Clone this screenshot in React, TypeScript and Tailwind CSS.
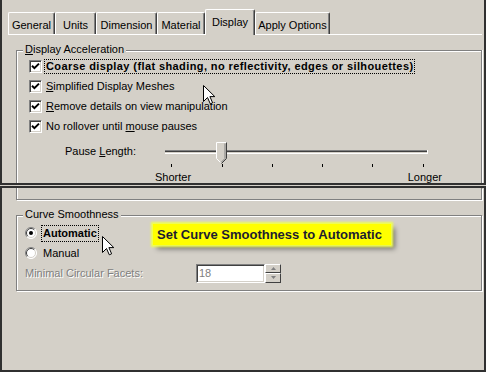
import React from "react";

const tabs = [
  { label: "General", cls: "w-[47px]", sel: false },
  { label: "Units", cls: "w-[41px]", sel: false },
  { label: "Dimension", cls: "w-[61px]", sel: false },
  { label: "Material", cls: "w-[48px]", sel: false },
  { label: "Display", cls: "w-[50px]", sel: true },
  { label: "Apply Options", cls: "w-[75px]", sel: false },
];

function Checkbox() {
  return (
    <span className="w-[13px] h-[13px] bg-white border border-t-[#808080] border-l-[#808080] border-b-white border-r-white shadow-[inset_1px_1px_0_#404040,inset_-1px_-1px_0_#d4d0c8] flex items-center justify-center shrink-0">
      <svg width="9" height="9" viewBox="0 0 9 9">
        <path d="M1 3.8 L3.4 6.2 L8 1.6" stroke="#000" strokeWidth="2" fill="none" />
      </svg>
    </span>
  );
}

function Radio({ checked }: { checked: boolean }) {
  return (
    <svg width="12" height="12" viewBox="0 0 12 12" className="shrink-0">
      <circle cx="6" cy="6" r="5.5" fill="#fff" />
      <path d="M2.1 9.9 A5.5 5.5 0 0 1 9.9 2.1" stroke="#808080" strokeWidth="1" fill="none" />
      <path d="M2.8 9.2 A4.5 4.5 0 0 1 9.2 2.8" stroke="#404040" strokeWidth="1" fill="none" />
      <path d="M9.9 2.1 A5.5 5.5 0 0 1 2.1 9.9" stroke="#ffffff" strokeWidth="1" fill="none" />
      <path d="M9.2 2.8 A4.5 4.5 0 0 1 2.8 9.2" stroke="#d4d0c8" strokeWidth="1" fill="none" />
      {checked && <circle cx="6" cy="6" r="2" fill="#000" />}
    </svg>
  );
}

function Cursor() {
  return (
    <svg width="13" height="20" viewBox="0 0 13 20">
      <path d="M0.5 0.5 L0.5 16.5 L4.5 12.5 L7.3 18.8 L9.6 17.8 L6.9 11.6 L11.8 11.6 Z" fill="#fff" stroke="#000" strokeWidth="1" strokeLinejoin="miter" />
    </svg>
  );
}

function CheckRow({ children, focus }: { children: React.ReactNode; focus?: boolean }) {
  return (
    <div className="h-[20px] flex items-center gap-[2px]">
      <Checkbox />
      <span
        className={
          "px-[1px] leading-[13px] border border-dotted " +
          (focus ? "border-black font-bold tracking-[0.4px]" : "border-transparent")
        }
      >
        {children}
      </span>
    </div>
  );
}

export default function App() {
  return (
    <div className="w-[486px] h-[372px] bg-[#d4d0c8] flex flex-col overflow-hidden relative font-['Liberation_Sans',Arial,sans-serif] text-[11px] text-black leading-[13px]">
      {/* Top frame */}
      <div className="h-[185px] border-x-2 border-b-2 border-[#303030] flex flex-col overflow-hidden">
        {/* Tab strip */}
        <div className="h-[25px] mt-[9px] ml-[6px] flex items-end">
          {tabs.map((t) =>
            t.sel ? (
              <div
                key={t.label}
                className={
                  t.cls +
                  " h-[26px] mb-[-1px] relative z-10 bg-[#d4d0c8] border-t border-l border-white border-r border-r-[#404040] shadow-[inset_-1px_0_0_#808080] rounded-t-[2px] flex items-start justify-center pt-[6px]"
                }
              >
                {t.label}
              </div>
            ) : (
              <div
                key={t.label}
                className={
                  t.cls +
                  " h-[22px] border-t border-l border-white border-r border-r-[#404040] shadow-[inset_-1px_0_0_#808080] rounded-t-[2px] flex items-start justify-center pt-[6px]"
                }
              >
                {t.label}
              </div>
            )
          )}
        </div>
        {/* Panel */}
        <div className="flex-1 ml-[6px] mr-[2px] border-t border-white flex flex-col pl-[8px]">
          <div className="flex-1 mt-[15px] relative border border-b-0 border-[#808080] shadow-[inset_1px_1px_0_#fff,1px_0_0_#fff] pt-[5px] pl-[12px] flex flex-col">
            <span className="absolute left-[6px] -top-[8px] px-[2px] bg-[#d4d0c8]">
              <span className="underline">D</span>isplay Acceleration
            </span>
            <CheckRow focus>Coarse display (flat shading, no reflectivity, edges or silhouettes)</CheckRow>
            <CheckRow>
              <span className="underline">S</span>implified Display Meshes
            </CheckRow>
            <CheckRow>
              <span className="underline">R</span>emove details on view manipulation
            </CheckRow>
            <CheckRow>
              No rollover until <span className="underline">m</span>ouse pauses
            </CheckRow>
            {/* Slider */}
            <div className="flex mt-[5px] pl-[36px]">
              <div className="w-[85px] h-[21px] flex items-center">
                <span>
                  Pause <span className="underline">L</span>ength:
                </span>
              </div>
              <div className="w-[300px] flex flex-col">
                <svg width="300" height="27" viewBox="0 0 300 27">
                  <rect x="15" y="9" width="263" height="1" fill="#808080" />
                  <rect x="15" y="10" width="263" height="1" fill="#404040" />
                  <rect x="15" y="11" width="263" height="1" fill="#d4d0c8" />
                  <rect x="15" y="12" width="263" height="1" fill="#ffffff" />
                  <rect x="277" y="9" width="1" height="4" fill="#ffffff" />
                  {/* thumb */}
                  <path d="M66 1 L76 1 L76 17 L71 22 L66 17 Z" fill="#d4d0c8" />
                  <path d="M66 17 L66 1 L76 1" stroke="#ffffff" strokeWidth="1" fill="none" transform="translate(0.5 0.5)" />
                  <path d="M76 1 L76 17 L71 22" stroke="#404040" strokeWidth="1" fill="none" transform="translate(0.5 0.5)" />
                  <path d="M75 2 L75 17 L71 21" stroke="#808080" strokeWidth="1" fill="none" transform="translate(0 0.5)" />
                  <path d="M66 17 L70 21" stroke="#ffffff" strokeWidth="1" fill="none" transform="translate(0.5 0.5)" />
                  {/* ticks */}
                  <rect x="21" y="23" width="1" height="3" fill="#000" />
                  <rect x="72" y="23" width="1" height="3" fill="#000" />
                  <rect x="122" y="23" width="1" height="3" fill="#000" />
                  <rect x="172" y="23" width="1" height="3" fill="#000" />
                  <rect x="222" y="23" width="1" height="3" fill="#000" />
                  <rect x="273" y="23" width="1" height="3" fill="#000" />
                </svg>
                <div className="flex justify-between pl-[5px] pr-[8px] mt-[3px]">
                  <span>Shorter</span>
                  <span>Longer</span>
                </div>
              </div>
            </div>
          </div>
        </div>
      </div>

      {/* Bottom frame */}
      <div className="flex-1 mt-[1px] border-2 border-[#303030] flex flex-col pl-[14px] pr-[2px]">
        <div className="h-[12px] border border-t-0 border-[#808080] shadow-[inset_1px_0_0_#fff,1px_1px_0_#fff]" />
        <div className="h-[76px] mt-[15px] relative border border-[#808080] shadow-[inset_1px_1px_0_#fff,1px_1px_0_#fff] pt-[7px] pl-[8px] flex flex-col">
          <span className="absolute left-[6px] -top-[8px] px-[2px] bg-[#d4d0c8]">Curve Smoothness</span>
          <div className="h-[20px] flex items-center gap-[4px]">
            <Radio checked />
            <span className="px-[1px] border border-dotted border-black font-bold leading-[15px]">Automatic</span>
          </div>
          <div className="h-[20px] flex items-center gap-[4px]">
            <Radio checked={false} />
            <span className="px-[1px] border border-transparent">Manual</span>
          </div>
          <div className="h-[20px] flex items-center">
            <span className="w-[171px] text-[#808080] [text-shadow:1px_1px_0_#fff]">Minimal Circular Facets:</span>
            <div className="w-[69px] h-[19px] bg-white border border-t-[#808080] border-l-[#808080] border-b-white border-r-white shadow-[inset_1px_1px_0_#404040,inset_-1px_-1px_0_#d4d0c8] flex items-center pl-[2px] text-[#808080]">
              18
            </div>
            <div className="w-[16px] h-[19px] flex flex-col">
              <div className="h-[9px] border border-t-white border-l-white border-b-[#404040] border-r-[#404040] bg-[#d4d0c8] flex items-center justify-center">
                <svg width="5" height="3" viewBox="0 0 5 3">
                  <path d="M0 3 L2.5 0 L5 3 Z" fill="#808080" />
                </svg>
              </div>
              <div className="h-[10px] border border-t-white border-l-white border-b-[#404040] border-r-[#404040] bg-[#d4d0c8] flex items-center justify-center">
                <svg width="5" height="3" viewBox="0 0 5 3">
                  <path d="M0 0 L2.5 3 L5 0 Z" fill="#808080" />
                </svg>
              </div>
            </div>
          </div>
        </div>
        <div className="flex-1" />
      </div>

      {/* Callout */}
      <div className="absolute left-[153px] top-[224px] w-[238px] h-[21px] bg-[#ffff00] shadow-[0_0_2px_2px_#f0ff50,4px_4px_5px_rgba(0,0,0,0.45)] flex items-center pl-[4px] font-bold text-[13px] text-[#1c1c30] whitespace-nowrap">
        Set Curve Smoothness to Automatic
      </div>

      {/* Cursors */}
      <div className="absolute left-[203px] top-[85px]">
        <Cursor />
      </div>
      <div className="absolute left-[102px] top-[236px]">
        <Cursor />
      </div>
    </div>
  );
}
